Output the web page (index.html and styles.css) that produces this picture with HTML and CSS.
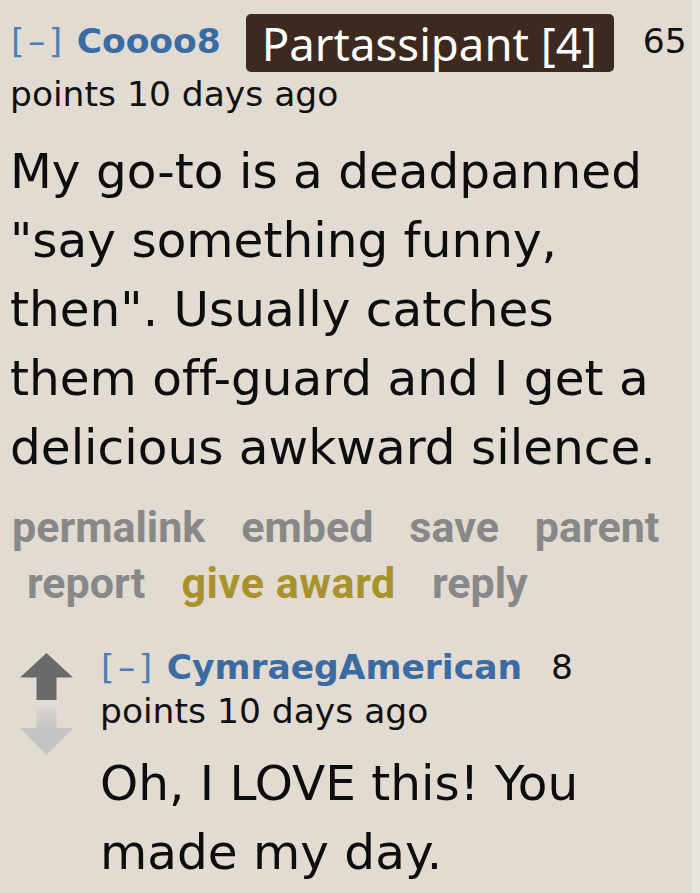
FILE: index.html
```html
<!DOCTYPE html>
<html lang="en">
<head>
<meta charset="utf-8">
<title>Comment thread</title>
<link rel="stylesheet" href="styles.css">
</head>
<body>
<div class="page">
  <div class="comment">
    <p class="tagline">
      <a class="expand">[–]</a> <a class="author">Coooo8</a> <span class="flair">Partassipant [4]</span> <span class="score">65 points</span> <time>10 days ago</time>
    </p>
    <div class="md">
      <p>My go-to is a deadpanned "say something funny, then". Usually catches them off-guard and I get a delicious awkward silence.</p>
    </div>
    <ul class="buttons">
      <li>permalink</li>
      <li>embed</li>
      <li>save</li>
      <li>parent</li>
      <li class="report">report</li>
      <li class="award">give award</li>
      <li>reply</li>
    </ul>
    <div class="child">
      <div class="midcol">
        <svg class="arrow" width="53" height="48" viewBox="0 0 53 48" aria-hidden="true">
          <polygon points="26.5,0 53,24.5 36.5,24.5 36.5,47 16.5,47 16.5,24.5 0,24.5" fill="#6a6a6a"/>
        </svg>
        <svg class="arrow" width="53" height="48" viewBox="0 0 53 48" aria-hidden="true">
          <defs>
            <linearGradient id="fade" x1="0" y1="0" x2="0" y2="1">
              <stop offset="0" stop-color="#c8c8c8" stop-opacity="0.3"/>
              <stop offset="0.45" stop-color="#c4c4c4"/>
              <stop offset="1" stop-color="#c4c4c4"/>
            </linearGradient>
          </defs>
          <polygon points="16.5,0 36.5,0 36.5,20 53,20 26.5,47 0,20 16.5,20" fill="url(#fade)"/>
        </svg>
      </div>
      <div class="entry">
        <p class="tagline">
          <a class="expand">[–]</a> <a class="author">CymraegAmerican</a> <span class="score">8 points</span> <time>10 days ago</time>
        </p>
        <div class="md">
          <p>Oh, I LOVE this! You made my day.</p>
        </div>
      </div>
    </div>
  </div>
</div>
</body>
</html>
```

FILE: styles.css
```css
html, body {
  margin: 0;
  padding: 0;
}

body {
  background: #e9e4dd;
  width: 700px;
  height: 893px;
  overflow: hidden;
}

.page {
  width: 692px;
  height: 893px;
  background: #e1dbd2;
  font-family: "DejaVu Sans", Verdana, sans-serif;
  font-variant-ligatures: none;
  color: #111;
}

.comment {
  padding: 0 0 0 10px;
}

.tagline {
  margin: 0;
  font-size: 34.5px;
  line-height: 44px;
  color: #111;
}

.comment > .tagline {
  padding-top: 14px;
}

.expand {
  color: #4f7db2;
  letter-spacing: 3.5px;
  margin-left: 1px;
}

.author {
  color: #3a6ba2;
  font-weight: bold;
}

.flair {
  display: inline-block;
  vertical-align: middle;
  background: #3c2a21;
  color: #fff;
  font-family: "Noto Sans", "Open Sans", sans-serif;
  font-size: 45.5px;
  line-height: 58px;
  padding: 0 17px 0 16px;
  border-radius: 5px;
  margin: 0 0 0 14px;
}

.score {
  margin-left: 18px;
}

.md p {
  margin: 0;
  font-size: 48.5px;
  line-height: 69px;
  color: #0d0d0d;
}

.comment > .md {
  margin-top: 21px;
}

.buttons {
  list-style: none;
  margin: 17px 0 0;
  padding: 0 0 0 2px;
  display: flex;
  flex-wrap: wrap;
  column-gap: 36px;
  font-family: Roboto, "Liberation Sans", sans-serif;
  font-weight: bold;
  font-size: 43px;
  line-height: 56px;
  color: #888888;
}

.buttons .report {
  margin-left: 15px;
}

.buttons .award {
  color: #a8922c;
  letter-spacing: 0.6px;
}

.child {
  display: flex;
  gap: 27px;
  margin: 34px 0 0 10px;
}

.midcol {
  display: flex;
  flex-direction: column;
  gap: 7px;
  padding-top: 8px;
}

.arrow {
  display: block;
}

.entry {
  padding-right: 10px;
}

.entry .md {
  margin-top: 16px;
}
```
